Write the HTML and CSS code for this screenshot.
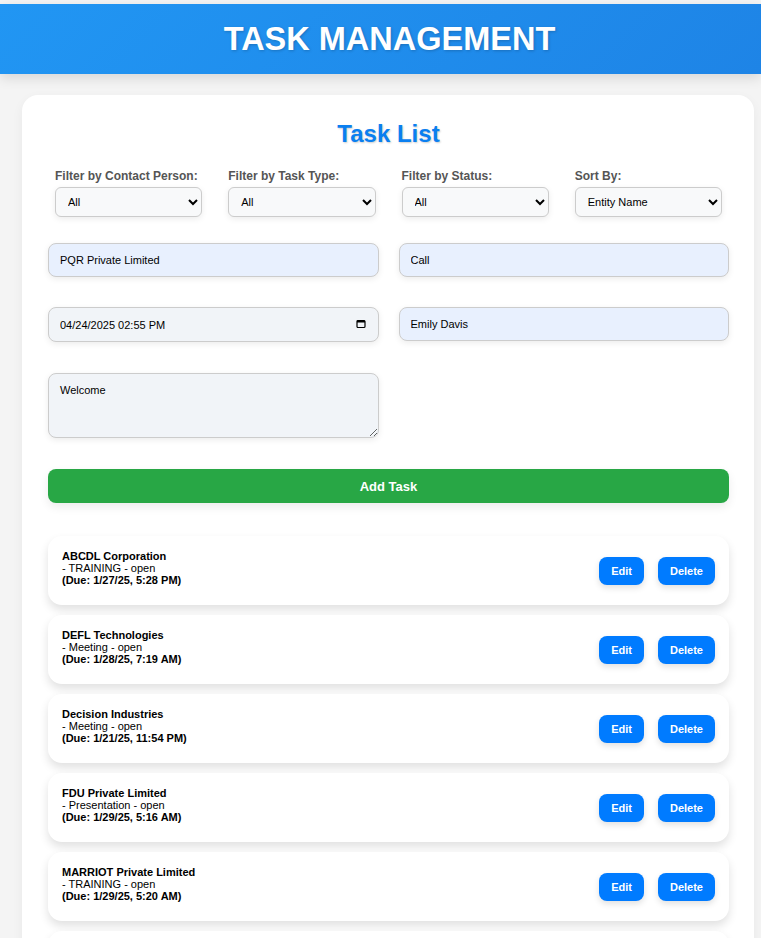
FILE: index.html
```html
<!DOCTYPE html>
<html>
<head>
<meta charset="utf-8">
<link rel="stylesheet" href="styles.css">
</head>
<body>
<header class="app-header"><h1>TASK MANAGEMENT</h1></header>
<main class="card">
  <h2 class="list-title">Task List</h2>
  <div class="filters">
    <div class="filter"><label>Filter by Contact Person:</label><select><option>All</option></select></div>
    <div class="filter"><label>Filter by Task Type:</label><select><option>All</option></select></div>
    <div class="filter"><label>Filter by Status:</label><select><option>All</option></select></div>
    <div class="filter"><label>Sort By:</label><select><option>Entity Name</option></select></div>
  </div>
  <div class="form-grid">
    <input class="field filled" type="text" value="PQR Private Limited">
    <input class="field filled" type="text" value="Call">
    <div class="date-wrap">
      <input class="field date" type="text" value="04/24/2025 02:55 PM">
      <svg class="cal" width="10" height="10" viewBox="0 0 10 10"><rect x="1" y="1.5" width="8" height="7" rx="1" fill="none" stroke="#000" stroke-width="1.2"/><rect x="1" y="1.5" width="8" height="2" fill="#000"/></svg>
    </div>
    <input class="field filled" type="text" value="Emily Davis">
    <textarea class="field note">Welcome</textarea>
  </div>
  <button class="add-btn">Add Task</button>
  <ul class="tasks">
    <li class="task"><div class="info"><b>ABCDL Corporation</b><span>- TRAINING - open</span><b>(Due: 1/27/25, 5:28 PM)</b></div><div class="actions"><button class="btn">Edit</button><button class="btn">Delete</button></div></li>
    <li class="task"><div class="info"><b>DEFL Technologies</b><span>- Meeting - open</span><b>(Due: 1/28/25, 7:19 AM)</b></div><div class="actions"><button class="btn">Edit</button><button class="btn">Delete</button></div></li>
    <li class="task"><div class="info"><b>Decision Industries</b><span>- Meeting - open</span><b>(Due: 1/21/25, 11:54 PM)</b></div><div class="actions"><button class="btn">Edit</button><button class="btn">Delete</button></div></li>
    <li class="task"><div class="info"><b>FDU Private Limited</b><span>- Presentation - open</span><b>(Due: 1/29/25, 5:16 AM)</b></div><div class="actions"><button class="btn">Edit</button><button class="btn">Delete</button></div></li>
    <li class="task"><div class="info"><b>MARRIOT Private Limited</b><span>- TRAINING - open</span><b>(Due: 1/29/25, 5:20 AM)</b></div><div class="actions"><button class="btn">Edit</button><button class="btn">Delete</button></div></li>
    <li class="task"></li>
  </ul>
</main>
</body>
</html>
```
FILE: styles.css
```css
* { box-sizing: border-box; }
html, body { margin: 0; }
body {
  padding-top: 4px;
  background: #f4f4f4;
  font-family: "Liberation Sans", Arial, sans-serif;
  color: #000;
}
.app-header {
  height: 70px;
  padding-left: 18px;
  background: linear-gradient(135deg, #2196f3, #1e84e6);
  display: flex;
  align-items: center;
  justify-content: center;
  box-shadow: 0 4px 12px rgba(0,0,0,0.12);
}
.app-header h1 {
  margin: 0;
  color: #fff;
  font-size: 32.5px;
  font-weight: bold;
  text-shadow: 1px 1px 3px rgba(0,0,0,0.2);
}
.card {
  margin: 21px 7px 0 22px;
  background: #fff;
  border-radius: 16px;
  padding: 26px 25px 20px 26px;
  box-shadow: 0 4px 12px rgba(0,0,0,0.05);
}
.list-title {
  margin: 0;
  text-align: center;
  font-size: 24px;
  line-height: 26px;
  color: #0a7ff0;
  text-shadow: 1px 1px 2px rgba(0,0,0,0.2);
}
.filters {
  display: grid;
  grid-template-columns: repeat(4, 1fr);
  column-gap: 26px;
  padding: 0 7px;
  margin-top: 22px;
}
.filter { display: flex; flex-direction: column; }
.filter label {
  font-size: 12px;
  font-weight: bold;
  color: #555;
  line-height: 14px;
  margin-bottom: 4px;
}
.filter select {
  height: 30px;
  border: 1px solid #ccc;
  border-radius: 6px;
  background: #f8f9fa;
  font-family: "Liberation Sans", Arial, sans-serif;
  font-size: 11px;
  padding: 0 8px;
  box-shadow: 0 2px 6px rgba(0,0,0,0.08);
  color: #000;
}
.form-grid {
  display: grid;
  grid-template-columns: 1fr 1fr;
  column-gap: 20px;
  row-gap: 30px;
  margin-top: 26px;
}
.field {
  width: 100%;
  height: 34px;
  border: 1px solid #ccc;
  border-radius: 8px;
  padding: 0 11px;
  font-family: "Liberation Sans", Arial, sans-serif;
  font-size: 11px;
  color: #000;
  box-shadow: 0 2px 6px rgba(0,0,0,0.08);
}
.filled { background: #e8f0fe; }
.date-wrap { position: relative; }
.date { background: #f1f4f8; height: 35px; }
.cal {
  position: absolute;
  right: 13px;
  top: 12px;
}
.note {
  height: 65px;
  background: #f1f4f8;
  padding: 10px 11px;
  resize: vertical;
  margin-top: 1px;
}
.add-btn {
  display: block;
  width: 100%;
  margin-top: 31px;
  height: 34px;
  border: none;
  border-radius: 8px;
  background: #28a745;
  color: #fff;
  font-family: "Liberation Sans", Arial, sans-serif;
  font-size: 13px;
  font-weight: bold;
  box-shadow: 0 4px 10px rgba(0,0,0,0.08);
}
.tasks {
  list-style: none;
  margin: 33px 0 0;
  padding: 0;
  display: flex;
  flex-direction: column;
  gap: 10px;
}
.task {
  height: 69px;
  background: #fff;
  border-radius: 14px;
  padding: 0 14px;
  display: flex;
  align-items: center;
  justify-content: space-between;
  box-shadow: 0 5px 10px rgba(0,0,0,0.12);
}
.info {
  display: flex;
  flex-direction: column;
  font-size: 11px;
  line-height: 12px;
  padding-bottom: 5px;
}
.actions { display: flex; gap: 14px; }
.btn {
  height: 28px;
  padding: 0 12px;
  border: none;
  border-radius: 8px;
  background: #007bff;
  color: #fff;
  font-family: "Liberation Sans", Arial, sans-serif;
  font-size: 11px;
  font-weight: bold;
  box-shadow: 0 3px 6px rgba(0,0,0,0.12);
}
```
